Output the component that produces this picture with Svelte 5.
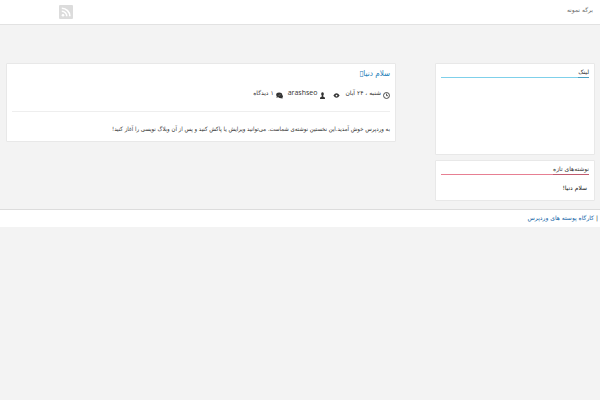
<script>
	const pages = [{ title: 'برگه نمونه', href: '#sample' }];
	const recent = [{ title: 'سلام دنیا!', href: '#hello' }];
	const post = {
		title: 'سلام دنیا▯',
		date: 'شنبه ، ۲۴ آبان',
		author: 'arashseo',
		comments: '۱ دیدگاه',
		text: 'به وردپرس خوش آمدید.این نخستین نوشته‌ی شماست. می‌توانید ویرایش یا پاکش کنید و پس از آن وبلاگ نویسی را آغاز کنید!'
	};
</script>

<div class="page" dir="rtl" lang="fa">
	<header class="topbar">
		<nav>
			{#each pages as page}
				<a href={page.href}>{page.title}</a>
			{/each}
		</nav>
		<a class="rss" href="#feed" aria-label="RSS">
			<svg viewBox="0 0 14 14" width="14" height="14">
				<rect width="14" height="14" rx="1" fill="#dcdcdc" />
				<circle cx="4" cy="10.2" r="1.3" fill="#fff" />
				<path d="M2.8 6.3a5 5 0 0 1 5 5M2.8 3.2a8.1 8.1 0 0 1 8.1 8.1" fill="none" stroke="#fff" stroke-width="1.6" />
			</svg>
		</a>
	</header>

	<div class="content">
		<aside>
			<section class="box links">
				<h3><span>لینک</span></h3>
			</section>
			<section class="box recent">
				<h3><span>نوشته‌های تازه</span></h3>
				<ul>
					{#each recent as item}
						<li><a href={item.href}>{item.title}</a></li>
					{/each}
				</ul>
			</section>
		</aside>

		<main>
			<article class="box post">
				<h2><a href="#hello">{post.title}</a></h2>
				<div class="meta">
					<span class="item date">
						<svg viewBox="0 0 8 8" width="7" height="7">
							<circle cx="4" cy="4" r="3.4" fill="none" stroke="#333" stroke-width="1" />
							<path d="M4 1.8V4.2H5.8" fill="none" stroke="#333" stroke-width="0.9" />
						</svg>
						<span>{post.date}</span>
					</span>
					<span class="item views">
						<svg viewBox="0 0 8 8" width="7" height="7">
							<path d="M0.4 4Q4 -1 7.6 4Q4 9 0.4 4Z" fill="#333" />
							<circle cx="4" cy="4" r="1" fill="#fff" />
						</svg>
					</span>
					<span class="item author">
						<svg viewBox="0 0 8 8" width="7" height="7">
							<path d="M4 0.2a1.6 2 0 0 1 0.9 3.6l0.2 1.8h0.9l0.8 1.1V8H1.2V6.7L2 5.6h0.9l0.2-1.8A1.6 2 0 0 1 4 0.2Z" fill="#333" />
						</svg>
						<span class="name">{post.author}</span>
					</span>
					<span class="item comments">
						<svg viewBox="0 0 8 8" width="7" height="7">
							<ellipse cx="3.6" cy="3.2" rx="3.4" ry="2.7" fill="#333" />
							<path d="M1 4.5L0.6 6.8L3 5.4Z" fill="#333" />
							<ellipse cx="5.2" cy="4.9" rx="2.7" ry="2.2" fill="#333" />
							<path d="M5 6.5L7.4 7.8L7.2 5.7Z" fill="#333" />
							<path d="M2.8 4.7Q3.2 3.2 5.4 3" fill="none" stroke="#fff" stroke-width="0.3" />
						</svg>
						<span>{post.comments}</span>
					</span>
				</div>
				<p>{post.text}</p>
			</article>
		</main>
	</div>

	<footer>
		<span>|</span>
		<a href="#themes">کارگاه پوسته های وردپرس</a>
	</footer>
</div>

<style>
	:global(body) {
		margin: 0;
		background: #f3f3f3;
	}

	.page {
		font-family: 'DejaVu Sans', sans-serif;
		font-size: 6px;
		line-height: 10px;
		color: #333;
	}

	a {
		color: inherit;
		text-decoration: none;
	}

	h2, h3, p, ul {
		margin: 0;
		padding: 0;
		font-weight: normal;
	}

	.topbar {
		display: flex;
		justify-content: space-between;
		align-items: flex-start;
		padding: 5px 7px 5px 59px;
		background: #fff;
		border-bottom: 1px solid #e2e2e2;
		color: #666;
	}

	.rss svg {
		display: block;
	}

	.content {
		display: flex;
		align-items: flex-start;
		gap: 39px;
		padding: 38px 5px 8px 6px;
	}

	aside {
		flex: none;
		width: 160px;
		display: flex;
		flex-direction: column;
		gap: 5px;
	}

	main {
		flex: 1;
		min-width: 0;
	}

	.box {
		box-sizing: border-box;
		background: #fff;
		border: 1px solid #e8e8e8;
		border-radius: 1px;
		padding: 3px 5px 7px;
	}

	.links {
		min-height: 92px;
	}

	h3 {
		display: flex;
		font-size: 6px;
		line-height: 10px;
		border-bottom: 1px solid #7fd0ea;
	}

	h3 span {
		margin-bottom: -1px;
		border-bottom: 1px solid #4a9fc0;
	}

	.recent h3 {
		border-color: #e77f92;
	}

	.recent h3 span {
		border-color: #c05a6e;
	}

	ul {
		list-style: none;
		padding: 8px 2px 0;
		color: #111;
	}

	.post {
		padding: 5px 5px 7px;
	}

	h2 {
		font-family: 'DejaVu Sans Condensed', 'DejaVu Sans', sans-serif;
		font-size: 8px;
		line-height: 10px;
		color: #1b7db8;
	}

	.meta {
		display: flex;
		padding: 9px 0 12px;
		border-bottom: 1px solid #eee;
	}

	.item {
		display: flex;
		gap: 2px;
	}

	.item svg {
		margin-top: 4px;
	}

	.views {
		margin-right: 5px;
	}

	.author {
		margin-right: 7px;
	}

	.comments {
		margin-right: 5px;
	}

	.name {
		font-family: 'Open Sans', sans-serif;
		font-size: 7px;
	}

	p {
		padding-top: 12px;
		font-family: 'DejaVu Sans Condensed', 'DejaVu Sans', sans-serif;
	}

	footer {
		display: flex;
		gap: 2px;
		padding: 3px 2px 4px;
		background: #fff;
		border-top: 1px solid #dcdcdc;
	}

	footer a {
		color: #0f62a5;
	}
</style>
